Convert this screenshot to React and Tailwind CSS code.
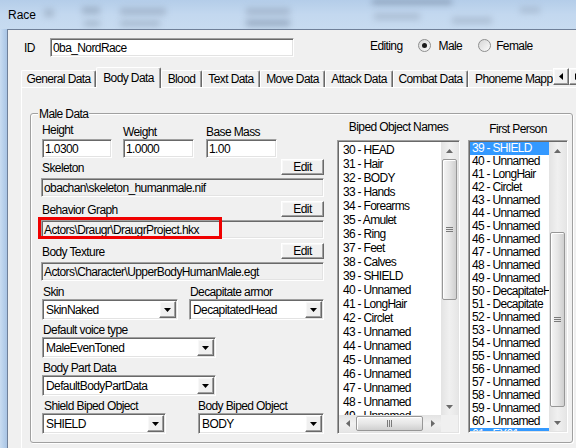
import React from "react";

const FONT = "font-['Liberation_Sans',Arial,sans-serif]";
const sunken =
  "border border-t-[#a0a0a0] border-l-[#a0a0a0] border-b-white border-r-white shadow-[inset_1px_1px_0_#696969,inset_-1px_-1px_0_#e3e3e3]";
const raised =
  "border border-t-white border-l-white border-b-[#696969] border-r-[#696969] shadow-[inset_-1px_-1px_0_#a0a0a0,inset_1px_1px_0_#f8f8f8]";

function Tri({ dir = "down", color = "#000", w = 7, h = 4 }) {
  const horiz = dir === "left" || dir === "right";
  const vw = horiz ? h : w;
  const vh = horiz ? w : h;
  const pts = {
    down: `0,0 ${w},0 ${w / 2},${h}`,
    up: `0,${h} ${w},${h} ${w / 2},0`,
    left: `${h},0 ${h},${w} 0,${w / 2}`,
    right: `0,0 0,${w} ${h},${w / 2}`,
  }[dir];
  return (
    <svg width={vw} height={vh} viewBox={`0 0 ${vw} ${vh}`}>
      <polygon points={pts} fill={color} />
    </svg>
  );
}

function Radio({ checked, className = "" }) {
  return (
    <div
      className={`w-[13px] h-[13px] shrink-0 rounded-full border border-[#8e8f8f] bg-gradient-to-br from-[#d6d6d6] to-[#fbfbfb] flex items-center justify-center ${className}`}
    >
      {checked && <div className="w-[5px] h-[5px] rounded-full bg-[#1b1b1b]" />}
    </div>
  );
}

function EditBtn() {
  return (
    <div className={`${raised} bg-[#f0f0f0] w-[43px] h-[16px] flex items-center justify-center leading-[14px]`}>
      Edit
    </div>
  );
}

function Field({ children }) {
  return (
    <div className={`${sunken} bg-[#f0f0f0] h-[19px] flex items-center px-[2px] whitespace-nowrap overflow-hidden`}>
      {children}
    </div>
  );
}

function Combo({ value, w }) {
  return (
    <div className={`${sunken} bg-white h-[21px] p-[1px] flex ${w}`}>
      <div className="flex-1 flex items-center pl-[2px] whitespace-nowrap overflow-hidden">{value}</div>
      <div className={`${raised} bg-[#f0f0f0] w-[17px] flex items-center justify-center`}>
        <Tri dir="down" />
      </div>
    </div>
  );
}

function SArrow({ dir }) {
  return (
    <div className="w-[17px] h-[17px] shrink-0 flex items-center justify-center">
      <Tri dir={dir} color="#6a6a6a" />
    </div>
  );
}

function VScroll({ spacer, thumb }) {
  return (
    <div className="w-[17px] shrink-0 flex flex-col bg-gradient-to-r from-[#e3e3e3] via-[#f0f0f0] to-[#e6e6e6]">
      <SArrow dir="up" />
      <div className="flex-1 flex flex-col">
        <div className={spacer} />
        <div
          className={`${thumb} mx-[1px] rounded-[2px] border border-[#979797] bg-gradient-to-r from-[#f5f5f5] via-[#e6e6e6] to-[#cfcfcf] shadow-[inset_1px_1px_0_#fff] flex flex-col items-center justify-center gap-[1px]`}
        >
          <div className="w-[7px] h-[1px] bg-[#7a7a7a]" />
          <div className="w-[7px] h-[1px] bg-[#7a7a7a]" />
          <div className="w-[7px] h-[1px] bg-[#7a7a7a]" />
        </div>
      </div>
      <SArrow dir="down" />
    </div>
  );
}

function HScroll() {
  return (
    <div className="flex-1 h-[17px] flex bg-gradient-to-b from-[#e3e3e3] via-[#f0f0f0] to-[#e6e6e6]">
      <SArrow dir="left" />
      <div className="flex-1 flex py-[1px]">
        <div className="w-[67px] rounded-[2px] border border-[#979797] bg-gradient-to-b from-[#f5f5f5] via-[#e6e6e6] to-[#cfcfcf] shadow-[inset_1px_1px_0_#fff] flex items-center justify-center gap-[1px]">
          <div className="w-[1px] h-[7px] bg-[#7a7a7a]" />
          <div className="w-[1px] h-[7px] bg-[#7a7a7a]" />
          <div className="w-[1px] h-[7px] bg-[#7a7a7a]" />
        </div>
      </div>
      <SArrow dir="right" />
    </div>
  );
}

const biped = [
  "30 - HEAD", "31 - Hair", "32 - BODY", "33 - Hands", "34 - Forearms", "35 - Amulet",
  "36 - Ring", "37 - Feet", "38 - Calves", "39 - SHIELD", "40 - Unnamed", "41 - LongHair",
  "42 - Circlet", "43 - Unnamed", "44 - Unnamed", "45 - Unnamed", "46 - Unnamed",
  "47 - Unnamed", "48 - Unnamed", "49 - Unnamed",
];

const firstPerson = [
  "39 - SHIELD", "40 - Unnamed", "41 - LongHair", "42 - Circlet", "43 - Unnamed",
  "44 - Unnamed", "45 - Unnamed", "46 - Unnamed", "47 - Unnamed", "48 - Unnamed",
  "49 - Unnamed", "50 - DecapitateHead", "51 - Decapitate", "52 - Unnamed", "53 - Unnamed",
  "54 - Unnamed", "55 - Unnamed", "56 - Unnamed", "57 - Unnamed", "58 - Unnamed",
  "59 - Unnamed", "60 - Unnamed", "61 - FX01",
];
const fpSelected = new Set(["39 - SHIELD", "61 - FX01"]);

const tabs = [
  ["General Data", "w-[75px]"],
  ["Body Data", "w-[65px]", true],
  ["Blood", "w-[41px]"],
  ["Text Data", "w-[58px]"],
  ["Move Data", "w-[65px]"],
  ["Attack Data", "w-[68px]"],
  ["Combat Data", "w-[75px]"],
];

function Tab({ label, w, selected }) {
  if (selected) {
    return (
      <div
        className={`${w} h-[21px] shrink-0 bg-[#f0f0f0] rounded-t-[2px] border-t border-l border-white border-r border-r-[#696969] shadow-[inset_-1px_0_0_#a0a0a0] flex items-center justify-center leading-[14px] pb-[1px] whitespace-nowrap`}
      >
        {label}
      </div>
    );
  }
  return (
    <div
      className={`${w} h-[17px] mb-[1px] shrink-0 bg-[#f0f0f0] rounded-t-[2px] border-t border-l border-white border-r border-r-[#696969] shadow-[inset_-1px_0_0_#a0a0a0] flex items-center justify-center leading-[14px] whitespace-nowrap`}
    >
      {label}
    </div>
  );
}

function TitleBar() {
  const blobs = [
    "left-[44px] top-[9px] w-[10px] h-[8px] bg-[#8c9cb0]",
    "left-[82px] top-[7px] w-[18px] h-[7px] bg-[#7f90a6]",
    "left-[84px] top-[21px] w-[16px] h-[5px] bg-[#7f90a6]",
    "left-[120px] top-[8px] w-[46px] h-[7px] bg-[#8898ae]",
    "left-[120px] top-[21px] w-[40px] h-[5px] bg-[#7f90a6]",
    "left-[246px] top-[8px] w-[44px] h-[7px] bg-[#8898ae]",
    "left-[246px] top-[20px] w-[44px] h-[6px] bg-[#667892]",
    "left-[372px] top-[0px] w-[80px] h-[4px] bg-[#4d5d75]",
    "left-[374px] top-[13px] w-[46px] h-[7px] bg-[#95a6bb]",
    "left-[452px] top-[17px] w-[40px] h-[7px] bg-[#95a6bb]",
    "left-[520px] top-[7px] w-[20px] h-[6px] bg-[#95a6bb]",
  ];
  return (
    <div className="relative h-[29px] shrink-0 flex items-center pl-[8px] overflow-hidden bg-gradient-to-b from-[#b4cde9] via-[#c3d8ef] to-[#c7dbf0]">
      {blobs.map((b, i) => (
        <div key={i} className={`absolute ${b} blur-[3px] opacity-50`} />
      ))}
      <span className="relative text-[12px] tracking-normal leading-[14px] text-black">Race</span>
    </div>
  );
}

export default function App() {
  return (
    <div className={`w-[576px] h-[448px] overflow-hidden flex flex-col bg-[#bcd3ec] ${FONT} text-[12px] tracking-[-0.6px] text-black`}>
      <TitleBar />
      <div className="flex flex-1 min-h-0">
        <div className="w-[7px] shrink-0 bg-gradient-to-r from-[#c9dcf1] via-[#b8d0eb] to-[#a9c4e4]" />
        <div className="w-[600px] shrink-0 bg-[#f0f0f0] border-l border-t border-[#6f8099] flex flex-col">
          {/* ID / Editing row */}
          <div className="flex items-center h-[19px] mt-[8px] pl-[16px] shrink-0">
            <span className="w-[26px] leading-[14px]">ID</span>
            <div className={`${sunken} bg-white w-[244px] h-[19px] flex items-center pl-[2px]`}>0ba_NordRace</div>
            <div className="flex items-center mb-[4px] ml-[76px]">
              <span className="leading-[14px]">Editing</span>
              <Radio checked className="ml-[15px]" />
              <span className="ml-[8px] leading-[14px]">Male</span>
              <Radio className="ml-[16px]" />
              <span className="ml-[5px] leading-[14px]">Female</span>
            </div>
          </div>

          {/* Tabs */}
          <div className="relative z-10 flex items-end h-[21px] mt-[10px] pl-[13px] shrink-0">
            {tabs.map(([l, w, s]) => (
              <Tab key={l} label={l} w={w} selected={s} />
            ))}
            <div className="w-[85px] h-[17px] mb-[1px] shrink-0 bg-[#f0f0f0] rounded-t-[2px] border-t border-l border-white flex items-center pl-[6px] leading-[14px] whitespace-nowrap overflow-hidden">
              Phoneme Mapping
            </div>
            <div className={`${raised} self-start mt-[1px] w-[16px] h-[17px] shrink-0 bg-[#f0f0f0] flex items-center justify-center`}>
              <Tri dir="left" />
            </div>
            <div className={`${raised} self-start mt-[1px] w-[16px] h-[17px] shrink-0 bg-[#f0f0f0] flex items-center justify-center`}>
              <Tri dir="right" />
            </div>
          </div>

          {/* Panel */}
          <div className="-mt-px ml-[13px] flex-1 border-t border-l border-white flex flex-col">
            <div className="relative ml-[8px] mt-[25px] w-[543px] h-[330px] border border-[#a0a0a0] rounded-[3px] shadow-[inset_1px_1px_0_#fff,1px_1px_0_#fff]">
              <span className="absolute left-[7px] -top-[7px] px-[1px] bg-[#f0f0f0] leading-[14px]">Male Data</span>
              <div className="flex pt-[6px] pl-[10px]">
                {/* Left column */}
                <div className="w-[283px] flex flex-col pt-[3px] shrink-0">
                  <div className="flex h-[14px] leading-[14px]">
                    <span className="w-[82px] pl-[1px]">Height</span>
                    <span className="w-[83px] mt-[2px]">Weight</span>
                    <span className="mt-[2px]">Base Mass</span>
                  </div>
                  <div className="flex mt-[2px]">
                    <div className={`${sunken} bg-white ml-[1px] w-[70px] h-[19px] flex items-center pl-[2px]`}>1.0300</div>
                    <div className={`${sunken} bg-white ml-[11px] w-[71px] h-[19px] flex items-center pl-[2px]`}>1.0000</div>
                    <div className={`${sunken} bg-white ml-[12px] w-[71px] h-[19px] flex items-center pl-[2px]`}>1.00</div>
                  </div>

                  <div className="flex justify-between items-end mt-[1px]">
                    <span className="pl-[1px] leading-[14px]">Skeleton</span>
                    <EditBtn />
                  </div>
                  <div className="mt-[3px]">
                    <Field>obachan\skeleton_humanmale.nif</Field>
                  </div>

                  <div className="flex justify-between items-end mt-[4px]">
                    <span className="pl-[1px] leading-[14px]">Behavior Graph</span>
                    <EditBtn />
                  </div>
                  <div className="mt-[3px] relative">
                    <Field>Actors\Draugr\DraugrProject.hkx</Field>
                    <div className="absolute -left-[3px] -top-[3px] w-[184px] h-[22px] border-[3px] border-[#f00000]" />
                  </div>

                  <div className="flex justify-between items-end mt-[4px]">
                    <span className="pl-[1px] leading-[14px]">Body Texture</span>
                    <EditBtn />
                  </div>
                  <div className="mt-[3px]">
                    <Field>Actors\Character\UpperBodyHumanMale.egt</Field>
                  </div>

                  <div className="flex">
                    <div className="flex flex-col ml-[1px]">
                      <span className="h-[18px] pt-[4px] leading-[14px] pl-[1px]">Skin</span>
                      <Combo value="SkinNaked" w="w-[136px]" />
                    </div>
                    <div className="flex flex-col ml-[11px]">
                      <span className="h-[18px] pt-[4px] leading-[14px] pl-[1px]">Decapitate armor</span>
                      <Combo value="DecapitatedHead" w="w-[135px]" />
                    </div>
                  </div>
                  <div className="flex flex-col ml-[1px]">
                    <span className="h-[17px] pt-[3px] leading-[14px] pl-[1px]">Default voice type</span>
                    <Combo value="MaleEvenToned" w="w-[174px]" />
                  </div>
                  <div className="flex flex-col ml-[1px]">
                    <span className="h-[17px] pt-[3px] leading-[14px] pl-[1px]">Body Part Data</span>
                    <Combo value="DefaultBodyPartData" w="w-[174px]" />
                  </div>
                  <div className="flex">
                    <div className="flex flex-col ml-[1px]">
                      <span className="h-[17px] pt-[3px] leading-[14px] pl-[2px]">Shield Biped Object</span>
                      <Combo value="SHIELD" w="w-[124px]" />
                    </div>
                    <div className="flex flex-col ml-[32px]">
                      <span className="h-[17px] pt-[3px] leading-[14px]">Body Biped Object</span>
                      <Combo value="BODY" w="w-[126px]" />
                    </div>
                  </div>
                </div>

                {/* Biped Object Names */}
                <div className="flex flex-col ml-[13px] w-[123px] shrink-0">
                  <div className="h-[20px] leading-[14px] text-center whitespace-nowrap">Biped Object Names</div>
                  <div className={`${sunken} bg-white h-[294px] p-[1px] flex flex-col`}>
                    <div className="flex flex-1 min-h-0">
                      <div className="flex-1 overflow-hidden pt-[1px] pl-[4px] tracking-[-0.7px]">
                        {biped.map((t) => (
                          <div key={t} className="h-[14px] leading-[14px] whitespace-nowrap">{t}</div>
                        ))}
                      </div>
                      <VScroll spacer="h-0" thumb="h-[141px]" />
                    </div>
                    <div className="flex shrink-0">
                      <HScroll />
                      <div className="w-[17px] h-[17px] bg-[#f0f0f0]" />
                    </div>
                  </div>
                </div>

                {/* First Person */}
                <div className="flex flex-col ml-[8px] w-[100px] shrink-0">
                  <div className="h-[20px] pt-[2px] leading-[14px] text-center whitespace-nowrap">First Person</div>
                  <div className={`${sunken} bg-white h-[293px] p-[1px] flex`}>
                    <div className="flex-1 overflow-hidden tracking-[-0.7px]">
                      {firstPerson.map((t) => (
                        <div
                          key={t}
                          className={`h-[13px] leading-[13px] pl-[2px] whitespace-nowrap overflow-hidden ${
                            fpSelected.has(t) ? "bg-[#3399ff] text-white" : ""
                          }`}
                        >
                          {t}
                        </div>
                      ))}
                    </div>
                    <VScroll spacer="h-[73px]" thumb="h-[175px]" />
                  </div>
                </div>
              </div>
            </div>
          </div>
        </div>
      </div>
    </div>
  );
}
